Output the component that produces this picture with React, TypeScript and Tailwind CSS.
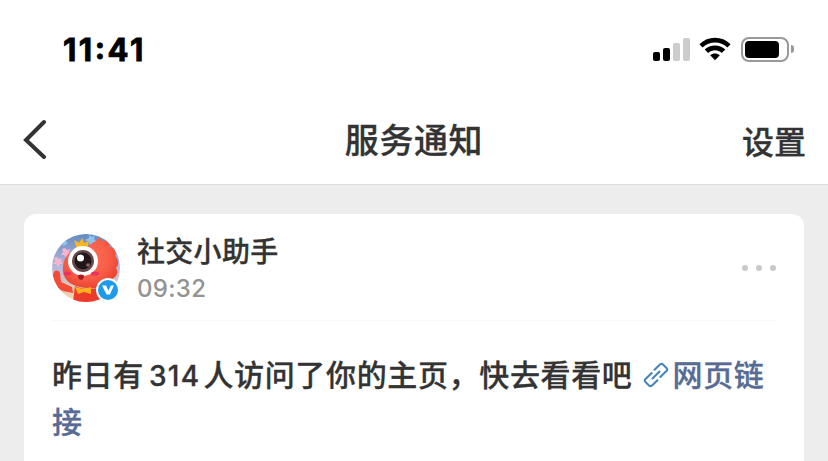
export default function App() {
  return (
    <main className="flex h-[461px] w-[828px] flex-col overflow-hidden bg-[#ededed] font-['Inter','Noto_Sans_CJK_SC',sans-serif] text-[#333333]">
      <header className="h-[185px] shrink-0 border-b border-[#dedede] bg-white">
        <StatusBar />
        <NavBar />
      </header>
      <section className="mx-6 mt-[29px] h-[280px] shrink-0 rounded-xl bg-white px-7">
        <div className="flex h-[107px] items-start border-b border-[#f8f8f8] pt-5">
          <Avatar />
          <div className="ml-[17px] flex-1">
            <h2 className="h-9 text-[28px] leading-9 font-medium tracking-[0.3px] whitespace-nowrap [-webkit-text-stroke:0.3px]">
              社交小助手
            </h2>
            <p className="mt-[1px] text-[24px] leading-9 font-medium tracking-[0.3px] text-[#929292]">09:32</p>
          </div>
          <div className="mt-[31px] flex gap-2">
            <span className="size-1.5 rounded-full bg-[#c8c8c8]" />
            <span className="size-1.5 rounded-full bg-[#c8c8c8]" />
            <span className="size-1.5 rounded-full bg-[#c8c8c8]" />
          </div>
        </div>
        <p className="mt-[31px] text-[30px] leading-[46px] font-medium tracking-[0.65px] whitespace-nowrap [-webkit-text-stroke:0.3px]">
          昨日有<span className="mr-[3px] ml-[5px] text-[28px] tracking-[1.3px]">314</span>人访问了你的主页，快去看看吧
          <a className="text-[#576b95]">
            <LinkIcon />
            网页链
            <br />接
          </a>
        </p>
      </section>
    </main>
  );
}

function StatusBar() {
  return (
    <div className="flex h-[98px] items-center justify-between pr-[34px] pl-[63px] text-black">
      <span className="pt-[2px] text-[31px] leading-[38px] font-bold tracking-[2.5px] [-webkit-text-stroke:0.8px]">
        11<span className="relative -top-[2px]">:</span>41
      </span>
      <div className="flex items-center">
        <div className="flex h-6 items-end gap-[3px]">
          <span className="h-[9px] w-[7px] rounded-[2px] bg-black" />
          <span className="h-[13px] w-[7px] rounded-[2px] bg-black" />
          <span className="h-[18px] w-[7px] rounded-[2px] bg-[#cccccc]" />
          <span className="h-[23px] w-[7px] rounded-[2px] bg-[#cccccc]" />
        </div>
        <svg className="ml-[9px] h-6 w-8" viewBox="0 0 32 24">
          <path d="M.4 7.2C9-1.4 23-1.4 31.6 7.2L28.4 10.5C21.4 3.8 10.6 3.8 3.6 10.5Z" />
          <path d="M5.7 12.5C11.4 7 20.6 7 26.3 12.5L22.8 15.9C19 12.3 13 12.3 9.2 15.9Z" />
          <path d="M11.2 18.3C14 15.9 18 15.9 20.8 18.3L16 23.2Z" />
        </svg>
        <div className="ml-[10px] flex h-[25px] w-12 rounded-[8px] border-2 border-[#999999] p-[2px]">
          <span className="h-[17px] w-[34px] rounded-[4px] bg-black" />
        </div>
        <span className="ml-[2px] h-2 w-[3px] rounded-r-full bg-[#999999]" />
      </div>
    </div>
  );
}

function NavBar() {
  return (
    <div className="grid h-[86px] grid-cols-3 items-center px-[22px]">
      <svg className="mb-[4px] h-10 w-6" viewBox="0 0 24 40" fill="none" stroke="#333333" strokeWidth="4" strokeLinecap="round">
        <path d="M22 3L4 21L22 38" />
      </svg>
      <h1 className="text-center text-[34px] leading-[44px] font-medium tracking-[0.6px] [-webkit-text-stroke:0.3px]">服务通知</h1>
      <button className="pt-[4px] text-right text-[32px] leading-[44px] font-medium [-webkit-text-stroke:0.3px]">设置</button>
    </div>
  );
}

function Avatar() {
  return (
    <div className="relative size-[68px]">
      <svg className="size-[68px]" viewBox="0 0 68 68">
        <defs>
          <clipPath id="face">
            <circle cx="34" cy="34" r="34" />
          </clipPath>
          <linearGradient id="sky" x1="0" y1="0" x2="0" y2="1">
            <stop offset="0" stopColor="#638bc2" />
            <stop offset=".5" stopColor="#b8b8dc" />
            <stop offset="1" stopColor="#ffd5a5" />
          </linearGradient>
          <radialGradient id="skin" cx=".45" cy=".4" r=".65">
            <stop offset="0" stopColor="#ff745d" />
            <stop offset=".65" stopColor="#f75a44" />
            <stop offset="1" stopColor="#e93f2d" />
          </radialGradient>
        </defs>
        <g clipPath="url(#face)">
          <path fill="url(#sky)" d="M0 0h68v68H0z" />
          <path fill="#f4b5cf" d="M5 23l2 2 3-1-1 3 2 3-3 0-2 3-2-3-3 0 2-3-1-3zM13 14l2 2 3-1-1 3 2 3-3 0-2 3-2-3-3 0 2-3-1-3z" />
          <path fill="#8dc3ee" d="M37 1l3 2 3-2-1 4 3 3-5 1-2 3-1-4-4-2 4-2zM13 6l3 3-4 3-3-3z" />
          <path fill="url(#skin)" d="M11 37C10 24 17 16 29 13c7 0 10-3 15-6 2-4 5-4 6 0 5-1 8 2 7 6 6 0 8 5 6 9 4 4 4 9 1 12 3 5 0 9-4 11-3 8-14 10-25 9C20 53 12 47 11 37Z" />
          <path fill="#ed3b2b" d="M23 52c7 4 21 4 27 0l4 16H21z" />
          <path fill="#f44b36" d="M1 42c0-6 5-7 7-3l1 9 11 5 1 6-10-2C5 55 1 49 1 42Z" />
          <path fill="#ffb51e" d="M22 6l5 3 3-5 2 5 5-2-2 7c-4-1-7-1-10 1z" />
          <circle cx="31" cy="27" r="15" fill="white" />
          <circle cx="31" cy="27" r="11" fill="#67484a" />
          <circle cx="31" cy="27" r="8.5" fill="#211719" />
          <circle cx="28.5" cy="24" r="3.5" fill="white" />
          <circle cx="36" cy="31" r="1.8" fill="#8c6763" />
          <ellipse cx="15.5" cy="39.5" rx="4" ry="2" fill="#ef315d" />
          <ellipse cx="43" cy="39.5" rx="4" ry="2" fill="#ef315d" />
          <path fill="#a71d24" d="M26 41.5q3-2 6 0 0 4-3 4.500-3-.5-3-4.500Z" />
          <path fill="#ffb11d" d="M23 53l8 2 8-2v7l-7-2-6 2z" />
        </g>
      </svg>
      <svg className="absolute top-[44px] left-[44px] size-6" viewBox="0 0 24 24">
        <circle cx="12" cy="12" r="12" fill="white" />
        <circle cx="12" cy="12" r="10" fill="#1e9bea" />
        <path d="M6 7.500h4l2.300 5L15 7.500h3l-4.200 9h-3.200z" fill="white" />
      </svg>
    </div>
  );
}

function LinkIcon() {
  return (
    <svg className="mr-[4px] ml-[10px] inline-block size-[26px] align-[-2px]" viewBox="0 0 26 26" fill="none" stroke="#4682bc" strokeWidth="2" strokeLinecap="round" strokeLinejoin="round">
      <path d="M11.5 7.8L17 2.5Q18.5 1 20 2.5L23.5 6Q25 7.5 23.5 9L17.3 15" />
      <path d="M14.5 18.2L9 23.5Q7.500 25 6 23.5L2.5 20Q1 18.5 2.5 17L8.7 11" />
      <path d="M9.5 16.5L16.5 9.5" />
    </svg>
  );
}
